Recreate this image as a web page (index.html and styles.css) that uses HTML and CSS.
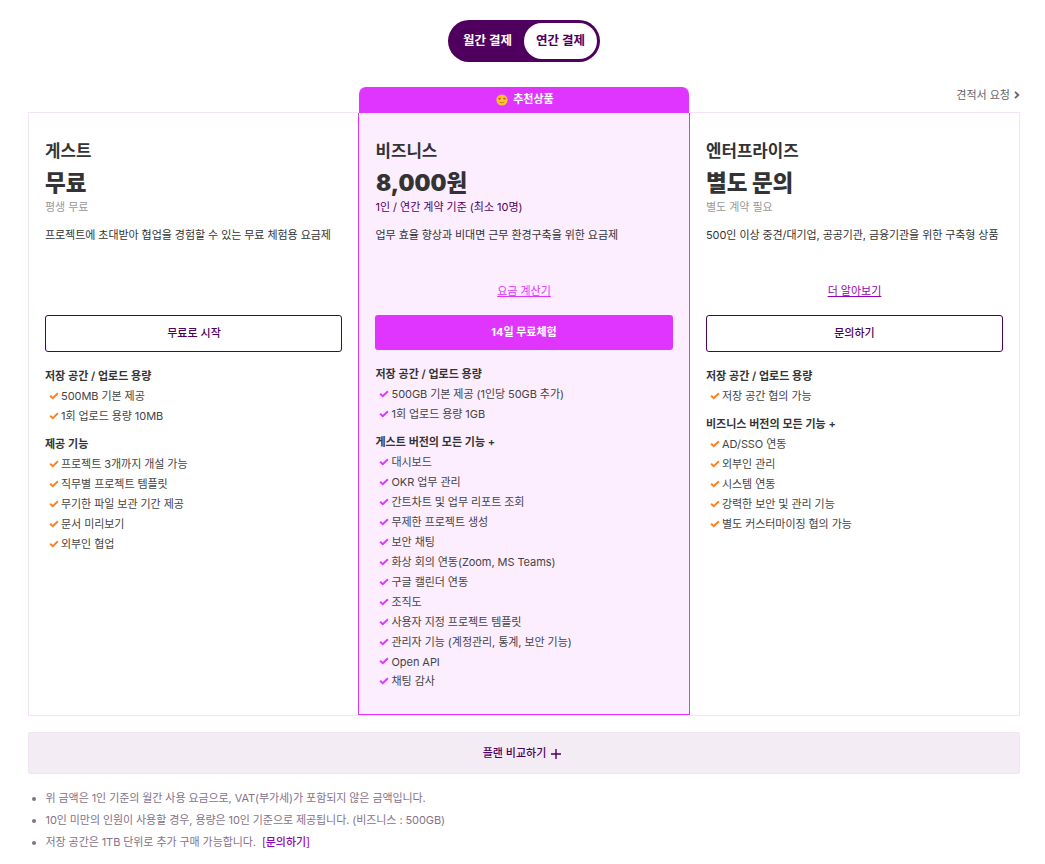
FILE: index.html
```html
<!DOCTYPE html>
<html lang="ko">
<head>
<meta charset="utf-8">
<title>요금 안내</title>
<link rel="stylesheet" href="styles.css">
</head>
<body>
<svg class="defs" width="0" height="0">
  <symbol id="check" viewBox="0 0 10 8"><path d="M1.1 3.7 3.8 6.2 8.9 1.3" fill="none" stroke="currentColor" stroke-width="1.9"/></symbol>
</svg>
<main class="page">
  <div class="toggle"><span class="toggle-item">월간 결제</span><span class="toggle-item active">연간 결제</span></div>
  <div class="topline">
    <div class="recommend">
      <svg class="emoji" viewBox="0 0 12 12"><circle cx="6" cy="6" r="5.6" fill="#ffc928"/><path d="M2.2 3.8h2.7v1.1L3.6 6 2.3 5zM7.1 3.8h2.7L9.7 5 8.4 6 7.1 4.9z" fill="#ef5138"/><path d="M3.5 8q2.5 1.7 5 0" fill="none" stroke="#b8742c" stroke-width=".9"/></svg>
      <span>추천상품</span>
    </div>
    <a class="quote">견적서 요청<svg class="chevron" viewBox="0 0 6 8"><path d="M1 .8 4.3 4 1 7.2" fill="none" stroke="currentColor" stroke-width="1.8"/></svg></a>
  </div>
  <section class="plans">
    <article class="plan guest">
      <h2 class="name">게스트</h2>
      <p class="price">무료</p>
      <p class="basis">평생 무료</p>
      <p class="desc">프로젝트에 초대받아 협업을 경험할 수 있는 무료 체험용 요금제</p>
      <div class="more"></div>
      <a class="button">무료로 시작</a>
      <h3 class="group">저장 공간 / 업로드 용량</h3>
      <ul class="features">
        <li><svg><use href="#check"/></svg>500MB 기본 제공</li>
        <li><svg><use href="#check"/></svg>1회 업로드 용량 10MB</li>
      </ul>
      <h3 class="group">제공 기능</h3>
      <ul class="features">
        <li><svg><use href="#check"/></svg>프로젝트 3개까지 개설 가능</li>
        <li><svg><use href="#check"/></svg>직무별 프로젝트 템플릿</li>
        <li><svg><use href="#check"/></svg>무기한 파일 보관 기간 제공</li>
        <li><svg><use href="#check"/></svg>문서 미리보기</li>
        <li><svg><use href="#check"/></svg>외부인 협업</li>
      </ul>
    </article>
    <article class="plan business">
      <h2 class="name">비즈니스</h2>
      <p class="price amount">8,000원</p>
      <p class="basis">1인 / 연간 계약 기준 (최소 10명)</p>
      <p class="desc">업무 효율 향상과 비대면 근무 환경구축을 위한 요금제</p>
      <div class="more"><a>요금 계산기</a></div>
      <a class="button">14일 무료체험</a>
      <h3 class="group">저장 공간 / 업로드 용량</h3>
      <ul class="features">
        <li><svg><use href="#check"/></svg>500GB 기본 제공 (1인당 50GB 추가)</li>
        <li><svg><use href="#check"/></svg>1회 업로드 용량 1GB</li>
      </ul>
      <h3 class="group">게스트 버전의 모든 기능 +</h3>
      <ul class="features">
        <li><svg><use href="#check"/></svg>대시보드</li>
        <li><svg><use href="#check"/></svg>OKR 업무 관리</li>
        <li><svg><use href="#check"/></svg>간트차트 및 업무 리포트 조회</li>
        <li><svg><use href="#check"/></svg>무제한 프로젝트 생성</li>
        <li><svg><use href="#check"/></svg>보안 채팅</li>
        <li><svg><use href="#check"/></svg>화상 회의 연동(Zoom, MS Teams)</li>
        <li><svg><use href="#check"/></svg>구글 캘린더 연동</li>
        <li><svg><use href="#check"/></svg>조직도</li>
        <li><svg><use href="#check"/></svg>사용자 지정 프로젝트 템플릿</li>
        <li><svg><use href="#check"/></svg>관리자 기능 (계정관리, 통계, 보안 기능)</li>
        <li class="tight"><svg><use href="#check"/></svg>Open API</li>
        <li><svg><use href="#check"/></svg>채팅 감사</li>
      </ul>
    </article>
    <article class="plan enterprise">
      <h2 class="name">엔터프라이즈</h2>
      <p class="price">별도 문의</p>
      <p class="basis">별도 계약 필요</p>
      <p class="desc">500인 이상 중견/대기업, 공공기관, 금융기관을 위한 구축형 상품</p>
      <div class="more"><a>더 알아보기</a></div>
      <a class="button">문의하기</a>
      <h3 class="group">저장 공간 / 업로드 용량</h3>
      <ul class="features">
        <li><svg><use href="#check"/></svg>저장 공간 협의 가능</li>
      </ul>
      <h3 class="group">비즈니스 버전의 모든 기능 +</h3>
      <ul class="features">
        <li><svg><use href="#check"/></svg>AD/SSO 연동</li>
        <li><svg><use href="#check"/></svg>외부인 관리</li>
        <li><svg><use href="#check"/></svg>시스템 연동</li>
        <li><svg><use href="#check"/></svg>강력한 보안 및 관리 기능</li>
        <li><svg><use href="#check"/></svg>별도 커스터마이징 협의 가능</li>
      </ul>
    </article>
  </section>
  <div class="compare">플랜 비교하기<svg class="plus" viewBox="0 0 10 10"><path d="M5 0v10M0 5h10" stroke="currentColor" stroke-width="1.4"/></svg></div>
  <ul class="notes">
    <li>위 금액은 1인 기준의 월간 사용 요금으로, VAT(부가세)가 포함되지 않은 금액입니다.</li>
    <li>10인 미만의 인원이 사용할 경우, 용량은 10인 기준으로 제공됩니다. (비즈니스 : 500GB)</li>
    <li>저장 공간은 1TB 단위로 추가 구매 가능합니다. <a class="contact">[<b>문의하기</b>]</a></li>
  </ul>
</main>
</body>
</html>
```
FILE: styles.css
```css
* { box-sizing: border-box; }
body {
  margin: 0;
  background: #fff;
  color: #333;
  font: 400 11px/20px Inter, "Noto Sans CJK KR", sans-serif;
}
h2, h3, p, ul { margin: 0; padding: 0; }
ul { list-style: none; }
.defs { display: block; }
.page { width: 992px; margin-left: 28px; padding-top: 20px; }

.toggle {
  display: flex;
  width: 152px;
  height: 42px;
  margin-left: 420px;
  padding: 3px;
  border-radius: 21px;
  background: #4f005e;
  color: #fff;
  font-size: 12.5px;
  font-weight: 700;
  line-height: 35px;
  text-align: center;
}
.toggle-item { width: 73px; white-space: nowrap; }
.toggle-item.active { border-radius: 18px; background: #fff; color: #4f005e; }

.topline {
  display: grid;
  grid-template-columns: 331px 330px 331px;
  height: 25px;
  margin-top: 25px;
}
.recommend {
  grid-column: 2;
  display: flex;
  justify-content: center;
  align-items: center;
  gap: 5px;
  height: 26px;
  padding: 0 0 2px 2px;
  border-radius: 7px 7px 0 0;
  background: #e035ff;
  color: #fff;
  font-weight: 700;
  position: relative;
}
.emoji { width: 12px; height: 12px; margin-top: 2px; }
.quote {
  display: flex;
  justify-content: flex-end;
  align-items: center;
  gap: 4px;
  height: 16px;
  color: #666;
}
.chevron { width: 6px; height: 8px; }

.plans {
  display: grid;
  grid-template-columns: repeat(3, 330px);
  height: 604px;
  border: 1px solid #f3e4f5;
}
.plan { padding: 26px 17px 0 16px; white-space: nowrap; }
.enterprise { padding: 26px 16px 0 17px; }
.business {
  margin: 0 -1px;
  padding: 26px 16px 0;
  border: 1px solid #e035ff;
  border-top: 0;
  background: #fceeff;
}
.name { height: 24px; font-size: 16.8px; font-weight: 600; line-height: 24px; }
.price { height: 30px; margin-top: 5px; font-size: 22.5px; font-weight: 900; line-height: 30px; }
.price.amount { padding-left: 1px; }
.basis { height: 18px; line-height: 18px; color: #999; letter-spacing: -.03px; }
.business .basis { color: #4f005e; }
.desc { margin-top: 9px; letter-spacing: -.06px; }
.enterprise .desc { letter-spacing: -.08px; }
.business .name, .business .basis, .business .desc { padding-left: .5px; }
.more { height: 20px; margin: 36px 0 14px; text-align: center; }
.more a { color: #9600b4; text-decoration: underline; }
.business .more a { color: #e035ff; }
.button {
  display: block;
  height: 37px;
  border: 1px solid #4f005e;
  border-radius: 3px;
  color: #4f005e;
  font-weight: 500;
  line-height: 34px;
  text-align: center;
}
.guest .button { padding-left: 1px; }
.business .button { height: 35px; border: 0; background: #e035ff; color: #fff; font-weight: 700; }
.group { margin-top: 8px; font-size: 11px; font-weight: 600; line-height: 20px; }
.business .group { padding-left: .5px; }
.button + .group { margin-top: 14px; }
.features li { display: flex; align-items: center; height: 20px; color: #444; letter-spacing: -.06px; }
.features li.tight { height: 19px; }
.features svg { width: 10px; height: 8px; margin: 0 3px 1px 3.5px; color: #ff7f1f; }
.guest .features svg, .enterprise .features svg { margin-right: 2.5px; }
.business .features svg { color: #e035ff; }

.compare {
  display: flex;
  justify-content: center;
  align-items: center;
  gap: 5px;
  height: 42px;
  margin-top: 16px;
  padding-right: 4px;
  border: 1px solid #f1e5f3;
  border-radius: 2px;
  background: #f4ecf5;
  color: #4f005e;
  font-weight: 500;
}
.plus { width: 10px; height: 10px; margin-top: 2px; }
.notes { padding: 13px 0 0 4px; color: #85728a; line-height: 22px; letter-spacing: -.08px; }
.notes li { display: flex; align-items: center; height: 22px; white-space: nowrap; }
.notes li:last-child { height: 21px; }
.notes li::before {
  content: "";
  width: 4px;
  height: 4px;
  margin: 2px 9.5px 0 0;
  border-radius: 50%;
  background: #85728a;
}
.contact { margin-left: 6px; color: #9600b4; }
.contact b { font-weight: 500; }
```
